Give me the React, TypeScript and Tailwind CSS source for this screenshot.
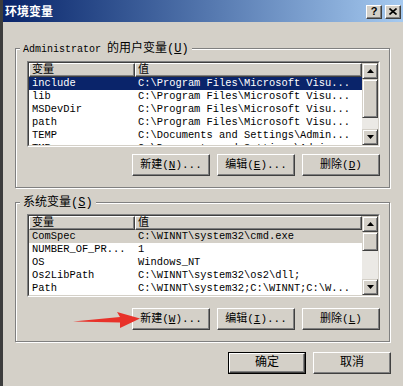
import React from 'react';

type Row = { name: string; value: string };

const userRows: Row[] = [
  { name: 'include', value: 'C:\\Program Files\\Microsoft Visu...' },
  { name: 'lib', value: 'C:\\Program Files\\Microsoft Visu...' },
  { name: 'MSDevDir', value: 'C:\\Program Files\\Microsoft Visu...' },
  { name: 'path', value: 'C:\\Program Files\\Microsoft Visu...' },
  { name: 'TEMP', value: 'C:\\Documents and Settings\\Admin...' },
  { name: 'TMP', value: 'C:\\Documents and Settings\\Admin...' },
];

const sysRows: Row[] = [
  { name: 'ComSpec', value: 'C:\\WINNT\\system32\\cmd.exe' },
  { name: 'NUMBER_OF_PR...', value: '1' },
  { name: 'OS', value: 'Windows_NT' },
  { name: 'Os2LibPath', value: 'C:\\WINNT\\system32\\os2\\dll;' },
  { name: 'Path', value: 'C:\\WINNT\\system32;C:\\WINNT;C:\\W...' },
  { name: 'PATHEXT', value: '.COM;.EXE;.BAT;.CMD;.VBS;.VBE;...' },
];

const raised =
  'border border-t-white border-l-white border-r-[#404040] border-b-[#404040] shadow-[inset_-1px_-1px_0_#808080] bg-[#d4d0c8]';

function ScrollArrow({ up }: { up: boolean }) {
  return (
    <div className="h-[16px] w-[16px] flex items-center justify-center bg-[#d4d0c8] border border-t-[#d4d0c8] border-l-[#d4d0c8] border-r-[#404040] border-b-[#404040] shadow-[inset_1px_1px_0_#fff,inset_-1px_-1px_0_#808080]">
      <svg width="7" height="4" viewBox="0 0 7 4">
        <path d={up ? 'M3.5 0L7 4H0Z' : 'M0 0H7L3.5 4Z'} fill="#000" />
      </svg>
    </div>
  );
}

interface VarListProps {
  rows: Row[];
  active: boolean;
  thumb: string;
}

const VarList: React.FC<VarListProps> = ({ rows, active, thumb }) => {
  return (
    <div className="h-full border border-t-[#808080] border-l-[#808080] border-r-white border-b-white">
      <div className="flex h-full border border-t-[#404040] border-l-[#404040] border-r-[#d4d0c8] border-b-[#d4d0c8] bg-white">
        <div className="flex-1 min-w-0 overflow-hidden">
          <div className="flex h-[14px] text-[11px] leading-[12px]">
            <div className={`w-[106px] pl-[2px] ${raised}`}>变量</div>
            <div className={`flex-1 pl-[2px] ${raised}`}>值</div>
          </div>
          {rows.map((r, i) => (
            <div
              key={r.name}
              className={`flex h-[13px] leading-[13px] text-[10.4px] whitespace-nowrap ${
                i === 0 ? (active ? 'bg-[#0a246a] text-white' : 'bg-[#d4d0c8] text-black') : 'text-black'
              }`}
            >
              <div className="w-[106px] pl-[3px] overflow-hidden">{r.name}</div>
              <div className="flex-1 pl-[3px] overflow-hidden">{r.value}</div>
            </div>
          ))}
        </div>
        <div className="w-[16px] flex flex-col">
          <ScrollArrow up />
          <div className={`w-[16px] ${thumb} bg-[#d4d0c8] border border-t-[#d4d0c8] border-l-[#d4d0c8] border-r-[#404040] border-b-[#404040] shadow-[inset_1px_1px_0_#fff,inset_-1px_-1px_0_#808080]`} />
          <div className="flex-1 bg-[#ebe9e5]" />
          <ScrollArrow up={false} />
        </div>
      </div>
    </div>
  );
};

function Btn({ label, keyChar, tail }: { label: string; keyChar: string; tail: string }) {
  return (
    <button className={`w-[78px] h-[22px] flex items-center justify-center text-[11px] text-black ${raised}`}>
      {label}(<span className="underline">{keyChar}</span>){tail}
    </button>
  );
}

function Group({
  title,
  children,
  className,
}: {
  title: React.ReactNode;
  children: React.ReactNode;
  className: string;
}) {
  return (
    <fieldset
      className={`ml-[12px] w-[375px] m-0 p-0 min-w-0 border border-[#808080] shadow-[inset_1px_1px_0_#fff,1px_1px_0_#fff] ${className}`}
    >
      <legend className="ml-[4px] px-[3px] h-[14px] leading-[14px] bg-[#d4d0c8] text-black">{title}</legend>
      {children}
    </fieldset>
  );
}

export default function App() {
  return (
    <div className="relative w-[403px] h-[386px] overflow-hidden bg-[#d4d0c8] border-l-[3px] border-[#3c3c3c] flex flex-col font-['Liberation_Mono','Noto_Sans_CJK_SC',monospace]">
      <div className="h-[22px] flex items-center justify-between pl-[2px] pr-[2px] bg-linear-to-r from-[#0a246a] to-[#a6caf0]">
        <span className="text-white font-bold text-[12px] font-['Noto_Sans_CJK_SC',sans-serif]">环境变量</span>
        <div className="flex gap-[3px] mt-[1px]">
          <div className={`w-[16px] h-[14px] flex items-center justify-center text-[11px] font-bold leading-none font-['Liberation_Sans',sans-serif] ${raised}`}>
            ?
          </div>
          <div className={`w-[16px] h-[14px] flex items-center justify-center ${raised}`}>
            <svg width="8" height="7" viewBox="0 0 8 7">
              <path d="M0.5 0.5L7.5 6.5M7.5 0.5L0.5 6.5" stroke="#000" strokeWidth="1.6" />
            </svg>
          </div>
        </div>
      </div>

      <Group
        className="mt-[19px]"
        title={
          <>
            <span className="text-[10px]">Administrator </span>
            <span className="text-[12px]">
              的用户变量(<span className="underline">U</span>)
            </span>
          </>
        }
      >
        <div className="pl-[11px] pr-[9px] pt-[6px] pb-[11px]">
          <div className="h-[86px]">
            <VarList rows={userRows} active thumb="h-[39px]" />
          </div>
          <div className="mt-[7px] flex justify-end gap-[7px]">
            <Btn label="新建" keyChar="N" tail="..." />
            <Btn label="编辑" keyChar="E" tail="..." />
            <Btn label="删除" keyChar="D" tail="" />
          </div>
        </div>
      </Group>

      <Group
        className="mt-[7px]"
        title={
          <span className="text-[12px]">
            系统变量(<span className="underline">S</span>)
          </span>
        }
      >
        <div className="pl-[11px] pr-[9px] pt-[5px] pb-[11px]">
          <div className="h-[83px]">
            <VarList rows={sysRows} active={false} thumb="h-[19px]" />
          </div>
          <div className="mt-[11px] flex justify-end gap-[7px]">
            <Btn label="新建" keyChar="W" tail="..." />
            <Btn label="编辑" keyChar="I" tail="..." />
            <Btn label="删除" keyChar="L" tail="" />
          </div>
        </div>
      </Group>

      <div className="mt-[10px] pr-[12px] flex justify-end gap-[7px]">
        <div className="border border-black">
          <button className={`w-[76px] h-[20px] flex items-center justify-center text-[12px] text-black ${raised}`}>
            确定
          </button>
        </div>
        <button className={`w-[78px] h-[22px] flex items-center justify-center text-[12px] text-black ${raised}`}>
          取消
        </button>
      </div>

      <svg
        className="absolute left-[67px] top-[308px] pointer-events-none"
        width="75"
        height="24"
        viewBox="0 0 75 24"
      >
        <path d="M3 13.5L50 9L47 4L70 10.5L50 20L50 14.5Z" fill="#e8322a" />
      </svg>
    </div>
  );
}
